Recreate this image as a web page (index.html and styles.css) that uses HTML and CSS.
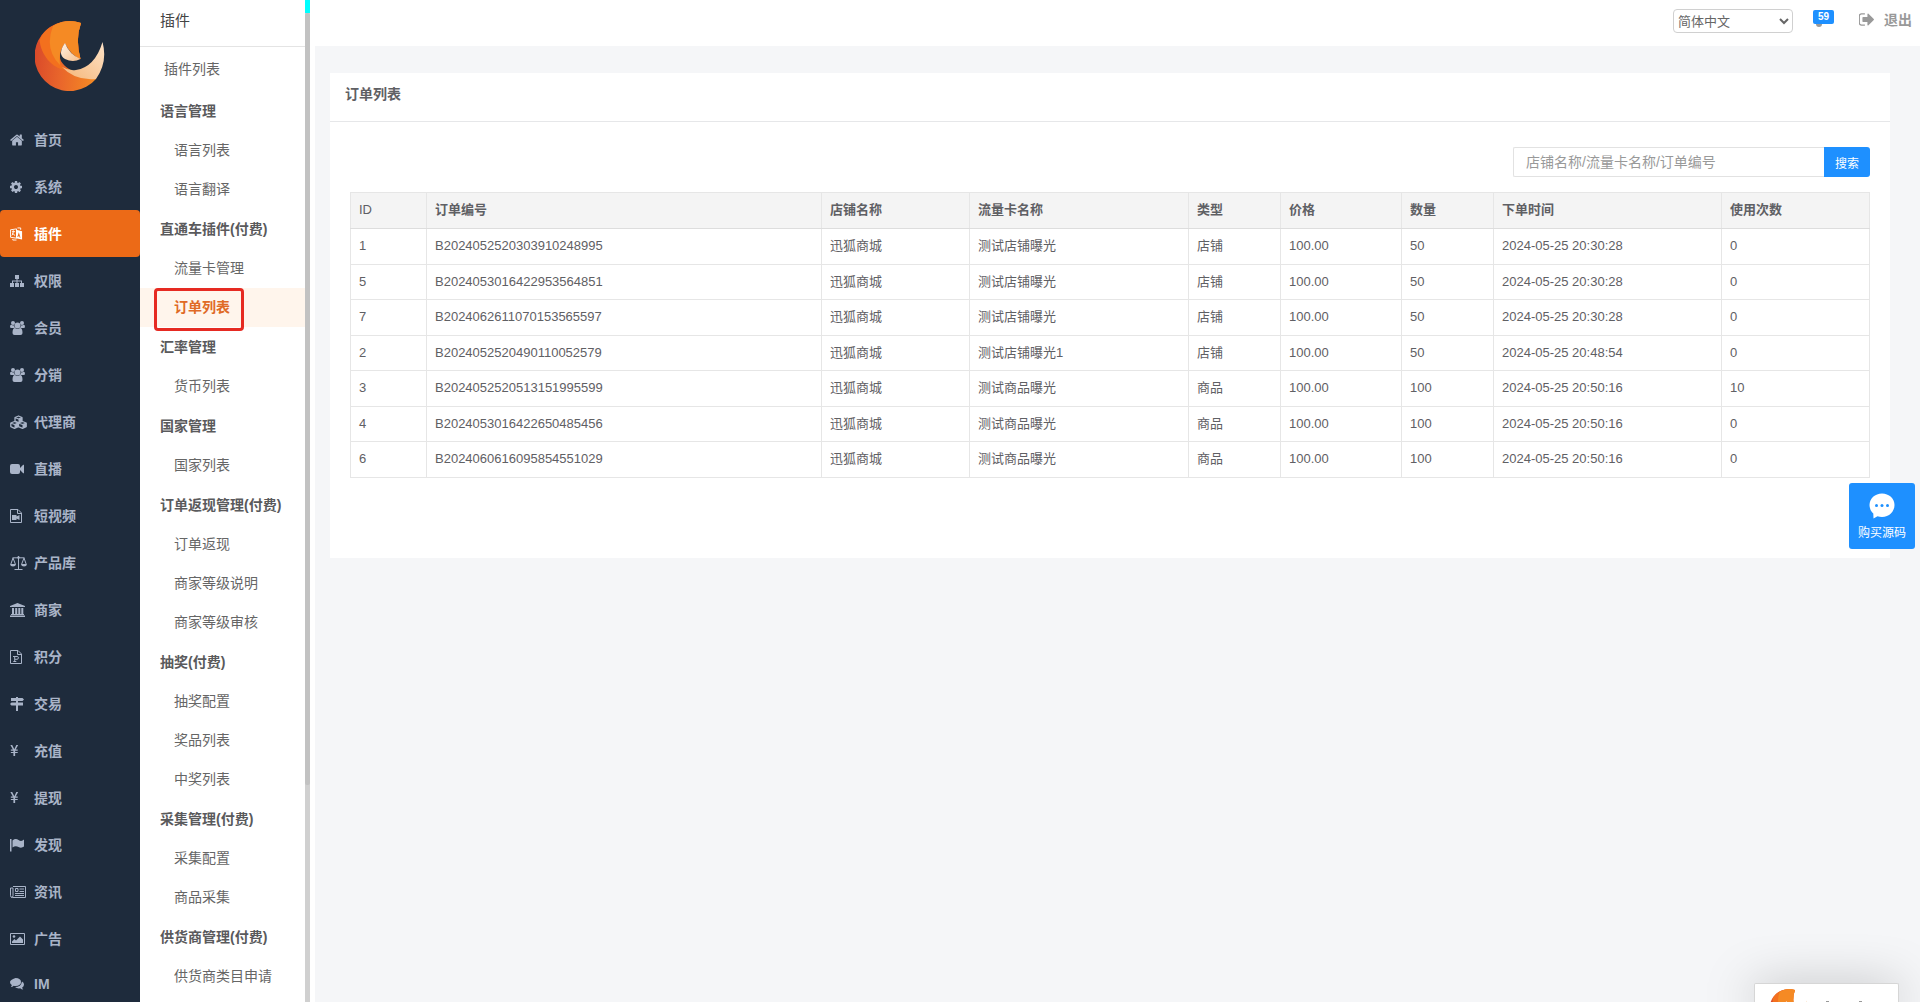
FILE: index.html
```html
<!DOCTYPE html>
<html lang="zh-CN">
<head>
<meta charset="utf-8">
<meta name="viewport" content="width=device-width, initial-scale=1">
<title>订单列表</title>
<link rel="stylesheet" href="styles.css">
</head>
<body>
<svg class="defs" aria-hidden="true">
  <defs>
    <linearGradient id="g-red" x1="0" y1="0.5" x2="1" y2="0.6">
      <stop offset="0" stop-color="#da4a2a"/><stop offset="0.45" stop-color="#e9662b"/><stop offset="1" stop-color="#f58a24"/>
    </linearGradient>
    <linearGradient id="g-cream" x1="0" y1="1" x2="1" y2="0">
      <stop offset="0" stop-color="#f5b577"/><stop offset="1" stop-color="#fde3c8"/>
    </linearGradient>
    <linearGradient id="g-drop" x1="0" y1="0" x2="1" y2="1">
      <stop offset="0" stop-color="#fff1e2"/><stop offset="1" stop-color="#f7bf8c"/>
    </linearGradient>
    <symbol id="logo" viewBox="0 0 70 70">
      <path fill="url(#g-red)" d="M46 2A35 35 0 1 0 61 58C50 56 30 50 25 38Q24 30 30 22Q36 34 45.500 38Q40 18 46 2z"/>
      <path fill="#f3701e" d="M46 2C30 -3 10 4 4.500 19C6 34 17 47 30 49Q25 44 25 36Q24 28 30 22Q36 34 45.500 38Q40 18 46 2z"/>
      <path fill="#f58a24" d="M46 2Q31 -3 18 5Q9 28 25 44Q23 30 30 22Q36 34 45.500 38Q40 18 46 2z"/>
      <path fill="url(#g-cream)" d="M67.500 21Q73 41 61 58Q40 60 27 46Q34 50 41 49Q60 46 67.500 21z"/>
      <path fill="url(#g-drop)" d="M30 22Q34 33 45.500 38Q38 42 30 38Q22 33 30 22z"/>
    </symbol>
    <symbol id="i-home" viewBox="64 64 1664 1664"><path d="M1472 992v480q0 26-19 45t-45 19h-384v-384h-256v384h-384q-26 0-45-19t-19-45v-480q0-1 .5-3t.5-3l575-474 575 474q1 2 1 6zm223-69l-62 74q-8 9-21 11h-3q-13 0-21-7l-692-577-692 577q-12 8-24 7-13-2-21-11l-62-74q-8-10-7-23.500t11-21.500l719-599q32-26 76-26t76 26l244 204v-195q0-14 9-23t23-9h192q14 0 23 9t9 23v408l219 182q10 8 11 21.500t-7 23.500z"/></symbol>
    <symbol id="i-cog" viewBox="128 128 1536 1536"><path d="M1152 896q0-106-75-181t-181-75-181 75-75 181 75 181 181 75 181-75 75-181zm512-109v222q0 12-8 23t-20 13l-185 28q-19 54-39 91 35 50 107 138 10 12 10 25t-9 23q-27 37-99 108t-94 71q-12 0-26-9l-138-108q-44 23-91 38-16 136-29 186-7 28-36 28h-222q-14 0-24.500-8.500t-11.500-21.500l-28-184q-49-16-90-37l-141 107q-10 9-25 9-14 0-25-11-126-114-165-168-7-10-7-23 0-12 8-23 15-21 51-66.500t54-70.500q-27-50-41-99l-183-27q-13-2-21-12.500t-8-23.500v-222q0-12 8-23t19-13l186-28q14-46 39-92-40-57-107-138-10-12-10-24 0-10 9-23 26-36 98.500-107.500t94.500-71.500q13 0 26 10l138 107q44-23 91-38 16-136 29-186 7-28 36-28h222q14 0 24.500 8.500t11.500 21.500l28 184q49 16 90 37l142-107q9-9 24-9 13 0 25 10 129 119 165 170 7 8 7 22 0 12-8 23-15 21-51 66.500t-54 70.500q26 50 41 98l183 28q13 2 21 12.500t8 23.500z"/></symbol>
    <symbol id="i-plugin" viewBox="0 0 14 14"><path fill="none" stroke="currentColor" d="M.5 2.500L7 1.500v10L.5 10.500zM2 4.500h3.500M3.500 3v1.500Q3.500 7 2 8.500M2.500 6Q4 8 5.500 8.500M8 .5h3.500v2M3 12.500v1h4"/><path d="M6.500 2.500L13 4v9L6.500 11.500z"/><path fill="#ec6a17" d="M9.500 5l1.800 6-1-.3-.3-1.200H9l-.2.800-.9-.2z"/></symbol>
    <symbol id="i-sitemap" viewBox="0 0 14 14"><path d="M5 1h4v4H7.500v1.500H12V9h2v4h-4V9h1V7.500H7.500V9H9v4H5V9h1.500V7.500H3V9h1v4H0V9h2V6.500h4.500V5H5z"/></symbol>
    <symbol id="i-users" viewBox="0 0 15 14"><circle cx="3" cy="2" r="2"/><circle cx="12" cy="2" r="2"/><circle cx="7.500" cy="4.500" r="3"/><path d="M0 6Q0 3.500 1.500 3.800Q3 5 4 4.300Q4 6 5 7H1.500Q0 7 0 6zM15 6q0-2.500-1.500-2.200Q12 5 11 4.300q0 1.700-1 2.700h3.500Q15 7 15 6zM2.500 12Q2.500 7 5 7Q7.500 9 10 7Q12.500 7 12.500 12Q12.500 14 10.500 14H4.500Q2.500 14 2.500 12z"/></symbol>
    <symbol id="i-cubes" viewBox="0 0 17 14"><path fill="none" stroke="currentColor" stroke-width="1.300" stroke-linejoin="round" d="M8.500 1L12 2.500V6L8.500 7.500L5 6V2.500zM5 2.500l3.500 1.500L12 2.500M4.500 6.500L8.300 8v3.700L4.500 13.300L.8 11.700V8zM.8 8l3.700 1.500L8.300 8M12.500 6.500L16.200 8v3.700l-3.700 1.600L8.500 11.700V8zM8.500 8l4 1.500L16.200 8"/><path d="M8.500 4L12 2.500V6L8.500 7.500zM4.500 9.500L8.300 8v3.700l-3.800 1.600zM12.500 9.500L16.200 8v3.700l-3.700 1.600z"/></symbol>
    <symbol id="i-video" viewBox="0 0 14 14"><rect y="2" width="10" height="10" rx="2"/><path d="M9.500 6.500L13.200 2.800Q14 2.300 14 3.300V10.700Q14 11.700 13.200 11.200L9.500 7.500z"/></symbol>
    <symbol id="i-filevideo" viewBox="0 0 12 14"><path fill="none" stroke="currentColor" d="M.5.500H8L11.500 4v9.500H.5zM7.500.5V4.500H11.500"/><path d="M2 6h4.500v1.500L9.500 6v5L6.500 9.500V11H2z"/></symbol>
    <symbol id="i-scale" viewBox="0 0 17 14"><path fill="none" stroke="currentColor" d="M8.500 0v13M4.500 13.500h8M2.500 1.800h12M3 2L.7 8.500h4.800zM14 2l-2.500 6.500h4.800z"/><path d="M0 8.500h6Q5.500 10.500 3 10.500T0 8.500zM11 8.500h6Q16.500 10.500 14 10.500T11 8.500z"/><circle cx="8.500" cy="1.500" r="1.200"/></symbol>
    <symbol id="i-bank" viewBox="0 0 15 14"><path d="M7.500 0L15 3v1H0V3zM2 5h2v6H2zM5.200 5h2v6h-2zM8.300 5h2v6h-2zM11.300 5h2v6h-2zM1 11h13v1H1zM0 12.500h15V14H0z"/></symbol>
    <symbol id="i-filep" viewBox="0 0 12 14"><path fill="none" stroke="currentColor" d="M.5.500H8L11.500 4v9.500H.5zM7.500.5V4.500H11.500M3 6.500h4q1.500 0 1.500 1.300T7 9.300H5M4.700 6.500V11.500M3.300 11.500h3"/></symbol>
    <symbol id="i-signs" viewBox="0 0 14 14"><path d="M6 0h2v1h4.500L14 2.500L12.500 4H1V1h5zM6 4h2v1.500h5v3H8V14H6V8.500H1.500L0 7L1.500 5.500H6z"/></symbol>
    <symbol id="i-yen" viewBox="0 0 9 12"><path d="M0 0h2l2.300 4.500L6.500 0h2L5.800 5H8v1.200H5.200V7.500H8v1.200H5.200V12H3.300V8.700H.5V7.500h2.800V6.200H.5V5h2.200z"/></symbol>
    <symbol id="i-flag" viewBox="0 0 14 14"><path d="M0 1h1.500v12.500H0zM2.500 2.500Q5.500 0 8.500 2T14 1.500V8.500Q11.500 10.500 8.500 9T2.500 9.500z"/></symbol>
    <symbol id="i-news" viewBox="0 0 16 12"><path fill="none" stroke="currentColor" d="M3 .5h12.500v11H2.500Q.5 11.500.5 9.500V2H3V9.500Q3 11.500 1.500 11.500M9.500 3h4.500M9.500 5.500h4.500M5 7.500h9M5 9.500h9"/><path fill="none" stroke="currentColor" d="M5.500 2.500h2.500v3H5.500z"/></symbol>
    <symbol id="i-image" viewBox="0 0 15 12"><path fill="none" stroke="currentColor" d="M.5.500h14v11H.5z"/><circle cx="4" cy="3.500" r="1.300"/><path d="M2 10V8.500L4.500 6L6 7.500L10 3.500L13 6.500V10z"/></symbol>
    <symbol id="i-comments" viewBox="0 0 14 12"><path d="M5.500 0Q11 .3 11 4T5.500 8Q4.500 8 3.700 7.800Q2.500 9 .8 9Q1.800 8 1.800 7Q0 6 0 4T5.500 0z"/><path d="M12 3.500q2 1 2 3t-1.800 3q0 1 1 2q-1.700 0-3-1.200Q7 10.800 5 9Q11 9 12 3.500z"/></symbol>
    <symbol id="i-out" viewBox="96 256 1540 1280"><path d="M704 1440q0 4 1 20t.5 26.500-3 23.500-10 19.500-20.500 6.500h-320q-119 0-203.500-84.500t-84.500-203.500v-704q0-119 84.500-203.500t203.500-84.500h320q13 0 22.500 9.500t9.500 22.500q0 4 1 20t.5 26.500-3 23.500-10 19.500-20.500 6.500h-320q-66 0-113 47t-47 113v704q0 66 47 113t113 47h312l11.500 1 11.500 3 8 5.500 7 9 2 13.500zm928-544q0 26-19 45l-544 544q-19 19-45 19t-45-19-19-45v-288h-448q-26 0-45-19t-19-45v-384q0-26 19-45t45-19h448v-288q0-26 19-45t45-19 45 19l544 544q19 19 19 45z"/></symbol>
  </defs>
</svg>
<div class="app">
  <nav class="sidebar" aria-label="主菜单">
    <a class="brand" href="#" aria-label="首页"><svg class="brand-logo"><use href="#logo"/></svg></a>
    <ul class="menu">
      <li><a href="#"><span class="ico"><svg width="14" height="14"><use href="#i-home"/></svg></span>首页</a></li>
      <li><a href="#"><span class="ico"><svg width="12" height="12"><use href="#i-cog"/></svg></span>系统</a></li>
      <li><a class="active" href="#"><span class="ico"><svg width="13" height="14"><use href="#i-plugin"/></svg></span>插件</a></li>
      <li><a href="#"><span class="ico"><svg width="14" height="14"><use href="#i-sitemap"/></svg></span>权限</a></li>
      <li><a href="#"><span class="ico"><svg width="15" height="14"><use href="#i-users"/></svg></span>会员</a></li>
      <li><a href="#"><span class="ico"><svg width="15" height="14"><use href="#i-users"/></svg></span>分销</a></li>
      <li><a href="#"><span class="ico"><svg width="17" height="14"><use href="#i-cubes"/></svg></span>代理商</a></li>
      <li><a href="#"><span class="ico"><svg width="14" height="14"><use href="#i-video"/></svg></span>直播</a></li>
      <li><a href="#"><span class="ico"><svg width="12" height="14"><use href="#i-filevideo"/></svg></span>短视频</a></li>
      <li><a href="#"><span class="ico"><svg width="17" height="14"><use href="#i-scale"/></svg></span>产品库</a></li>
      <li><a href="#"><span class="ico"><svg width="15" height="14"><use href="#i-bank"/></svg></span>商家</a></li>
      <li><a href="#"><span class="ico"><svg width="12" height="14"><use href="#i-filep"/></svg></span>积分</a></li>
      <li><a href="#"><span class="ico"><svg width="14" height="14"><use href="#i-signs"/></svg></span>交易</a></li>
      <li><a href="#"><span class="ico"><svg width="9" height="11"><use href="#i-yen"/></svg></span>充值</a></li>
      <li><a href="#"><span class="ico"><svg width="9" height="11"><use href="#i-yen"/></svg></span>提现</a></li>
      <li><a href="#"><span class="ico"><svg width="14" height="14"><use href="#i-flag"/></svg></span>发现</a></li>
      <li><a href="#"><span class="ico"><svg width="16" height="12"><use href="#i-news"/></svg></span>资讯</a></li>
      <li><a href="#"><span class="ico"><svg width="15" height="12"><use href="#i-image"/></svg></span>广告</a></li>
      <li><a class="latin" href="#"><span class="ico"><svg width="14" height="12"><use href="#i-comments"/></svg></span>IM</a></li>
    </ul>
  </nav>

  <nav class="submenu" aria-label="插件">
    <div class="submenu-body">
      <h2 class="submenu-title">插件</h2>
      <a class="sub-top" href="#">插件列表</a>
      <h3>语言管理</h3>
      <a href="#">语言列表</a>
      <a href="#">语言翻译</a>
      <h3>直通车插件(付费)</h3>
      <a href="#">流量卡管理</a>
      <a class="current" href="#">订单列表<span class="marker"></span></a>
      <h3>汇率管理</h3>
      <a href="#">货币列表</a>
      <h3>国家管理</h3>
      <a href="#">国家列表</a>
      <h3>订单返现管理(付费)</h3>
      <a href="#">订单返现</a>
      <a href="#">商家等级说明</a>
      <a href="#">商家等级审核</a>
      <h3>抽奖(付费)</h3>
      <a href="#">抽奖配置</a>
      <a href="#">奖品列表</a>
      <a href="#">中奖列表</a>
      <h3>采集管理(付费)</h3>
      <a href="#">采集配置</a>
      <a href="#">商品采集</a>
      <h3>供货商管理(付费)</h3>
      <a href="#">供货商类目申请</a>
    </div>
    <div class="scroll-track"><div class="scroll-accent"></div><div class="scroll-thumb"></div></div>
  </nav>

  <div class="page">
    <header class="topbar">
      <select class="lang" aria-label="语言"><option>简体中文</option></select>
      <a class="messages" href="#" aria-label="消息"><span class="badge">59</span></a>
      <a class="logout" href="#"><svg width="15" height="13"><use href="#i-out"/></svg>退出</a>
    </header>
    <main class="content">
      <section class="card">
        <h1 class="card-title">订单列表</h1>
        <div class="card-body">
          <form class="search">
            <input type="text" aria-label="搜索订单" placeholder="店铺名称/流量卡名称/订单编号">
            <button type="button">搜索</button>
          </form>
          <table class="orders">
            <colgroup><col class="c-id"><col class="c-no"><col class="c-shop"><col class="c-card"><col class="c-type"><col class="c-price"><col class="c-qty"><col class="c-time"><col class="c-used"></colgroup>
            <thead><tr><th class="latin">ID</th><th>订单编号</th><th>店铺名称</th><th>流量卡名称</th><th>类型</th><th>价格</th><th>数量</th><th>下单时间</th><th>使用次数</th></tr></thead>
            <tbody>
              <tr><td>1</td><td>B2024052520303910248995</td><td>迅狐商城</td><td>测试店铺曝光</td><td>店铺</td><td>100.00</td><td>50</td><td>2024-05-25 20:30:28</td><td>0</td></tr>
              <tr><td>5</td><td>B2024053016422953564851</td><td>迅狐商城</td><td>测试店铺曝光</td><td>店铺</td><td>100.00</td><td>50</td><td>2024-05-25 20:30:28</td><td>0</td></tr>
              <tr><td>7</td><td>B2024062611070153565597</td><td>迅狐商城</td><td>测试店铺曝光</td><td>店铺</td><td>100.00</td><td>50</td><td>2024-05-25 20:30:28</td><td>0</td></tr>
              <tr><td>2</td><td>B2024052520490110052579</td><td>迅狐商城</td><td>测试店铺曝光1</td><td>店铺</td><td>100.00</td><td>50</td><td>2024-05-25 20:48:54</td><td>0</td></tr>
              <tr><td>3</td><td>B2024052520513151995599</td><td>迅狐商城</td><td>测试商品曝光</td><td>商品</td><td>100.00</td><td>100</td><td>2024-05-25 20:50:16</td><td>10</td></tr>
              <tr><td>4</td><td>B2024053016422650485456</td><td>迅狐商城</td><td>测试商品曝光</td><td>商品</td><td>100.00</td><td>100</td><td>2024-05-25 20:50:16</td><td>0</td></tr>
              <tr><td>6</td><td>B2024060616095854551029</td><td>迅狐商城</td><td>测试商品曝光</td><td>商品</td><td>100.00</td><td>100</td><td>2024-05-25 20:50:16</td><td>0</td></tr>
            </tbody>
          </table>
        </div>
      </section>
    </main>
  </div>
</div>

<button class="buy" type="button">
  <svg width="26" height="26" viewBox="0 0 26 26"><path fill="#fff" d="M13 0.500C20 .5 25.500 5.500 25.500 12S20 24 13 24Q10.500 24 8.500 23.200L4.500 25.500L4.300 20.500Q.5 17 .5 12C.5 5.500 6 .5 13 .5z"/><g fill="#1e90ff"><circle cx="7.500" cy="12.500" r="1.500"/><circle cx="13" cy="12.500" r="1.500"/><circle cx="18.500" cy="12.500" r="1.500"/></g></svg>
  <span>购买源码</span>
</button>
<aside class="popup"><svg class="popup-logo"><use href="#logo"/></svg><span class="dots"><i></i><i></i></span></aside>
</body>
</html>
```
FILE: styles.css
```css
* { box-sizing: border-box; }

body {
  margin: 0;
  height: 100vh;
  overflow: hidden;
  background: #f5f6f8;
  color: #5f6064;
  font: 14px/20px "Liberation Sans", "Noto Sans CJK SC", sans-serif;
}

a { color: inherit; text-decoration: none; }
h1, h2, h3, ul { margin: 0; padding: 0; }
.defs { position: absolute; width: 0; height: 0; }
.app { display: flex; height: 100vh; }

/* Main menu */
.sidebar { flex: none; width: 140px; overflow: hidden; background: #1e2b3c; color: #a9b4c8; }
.brand { display: block; height: 116px; padding: 21px 0 0 35px; }
.brand-logo { width: 70px; height: 70px; }
.menu { list-style: none; }
.menu a { display: flex; align-items: center; height: 47px; padding-left: 10px; border-radius: 4px; font-weight: 600; }
.menu .active { background: #ec6a17; color: #fff; }
.menu .latin { height: 44px; }
.ico { display: flex; width: 24px; }
svg { fill: currentColor; }

/* Second-level menu */
.submenu { display: flex; flex: none; width: 175px; overflow: hidden; background: #fff; }
.submenu-body { width: 165px; color: #666; white-space: nowrap; }
.submenu-title { height: 47px; padding: 11px 20px 0; border-bottom: 1px solid #e4e4e4; font-size: 15px; font-weight: 400; color: #444; }
.submenu-body a { display: block; height: 39px; padding: 9px 0 0 34px; }
.submenu-body .sub-top { height: 44px; padding: 12px 0 0 24px; }
.submenu-body h3 { height: 40px; padding: 10px 0 0 20px; font-size: 14px; font-weight: 600; color: #5a5a5c; }
.submenu-body .current { position: relative; background: #fff5ec; color: #e06a26; font-weight: 600; }
.marker { position: absolute; left: 14px; top: 0; width: 90px; height: 43px; border: 3px solid #e62a22; border-radius: 4px; z-index: 1; }
.scroll-track { display: flex; flex-direction: column; width: 5px; background: #d0d0d0; }
.scroll-accent { flex: none; height: 13px; background: #0ff; }
.scroll-thumb { height: 77%; background: #c2c2c2; border-radius: 2px; }

/* Top bar */
.page { flex: 1; min-width: 0; }
.topbar { display: flex; justify-content: flex-end; height: 46px; padding: 9px 8px 0 0; background: #fff; color: #999; }
.lang { width: 120px; height: 24px; padding: 0; border: 1px solid #d0d0d0; border-radius: 4px; background: #fff; color: #666; font: 13px "Liberation Sans", "Noto Sans CJK SC", sans-serif; }
.messages { margin: 1px 25px 0 20px; }
.badge { display: block; width: 21px; height: 14px; border-radius: 2px; background: #1e90ff; color: #fff; font-size: 10px; font-weight: 700; line-height: 14px; text-align: center; }
.messages::after { content: ""; display: block; width: 6px; height: 3px; margin-left: 3px; border-radius: 0 0 3px 3px; background: #999; }
.logout { display: flex; gap: 10px; padding-top: 1px; font-weight: 600; }
.logout svg { margin-top: 3px; }

/* Order list */
.content { padding: 27px 30px 0 15px; }
.card { min-height: 485px; background: #fff; }
.card-title { height: 49px; padding: 11px 15px; border-bottom: 1px solid #e6e7e9; font-size: 14px; font-weight: 600; }
.card-body { padding: 25px 20px 80px; }
.search { display: flex; justify-content: flex-end; margin-bottom: 15px; }
.search input { width: 311px; height: 30px; padding: 0 12px; border: 1px solid #e2e2e2; border-right: 0; border-radius: 2px 0 0 2px; font: inherit; }
.search input::placeholder { color: #999; opacity: 1; }
.search button { width: 46px; height: 30px; padding: 0; border: 0; border-radius: 0 3px 3px 0; background: #1e90ff; color: #fff; font: 12px "Liberation Sans", "Noto Sans CJK SC", sans-serif; }
.orders { width: 100%; border-collapse: collapse; table-layout: fixed; font-size: 13px; line-height: 19px; }
.orders th, .orders td { height: 36px; padding: 7px 8px 9px; border: 1px solid #e6e6e6; text-align: left; vertical-align: top; white-space: nowrap; }
.orders th { background: #f4f4f4; border-bottom-color: #ddd; font-weight: 600; }
.orders .latin { font-weight: 400; }
.orders tr:nth-child(even) td { height: 35px; padding-bottom: 8px; }
.orders tr:nth-child(odd) td { height: 36px; }
.c-id { width: 76px; }
.c-shop { width: 148px; }
.c-card { width: 219px; }
.c-type { width: 92px; }
.c-price { width: 121px; }
.c-qty { width: 92px; }
.c-time { width: 228px; }
.c-used { width: 148px; }

/* Floating pieces */
.buy { position: fixed; right: 5px; top: 483px; display: flex; flex-direction: column; align-items: center; gap: 5px; width: 66px; height: 66px; padding: 10px 0 0; border: 0; border-radius: 3px; background: #1e90ff; color: #fff; font: 12px/18px "Liberation Sans", "Noto Sans CJK SC", sans-serif; }
.popup { position: fixed; right: 21px; bottom: 0; display: flex; gap: 18px; width: 145px; height: 19px; padding: 5px 0 0 15px; background: #fff; border: 1px solid #d6d6d6; border-bottom: 0; border-radius: 2px 2px 0 0; box-shadow: 0 6px 50px rgba(0, 0, 0, .35); clip-path: inset(-80px -80px 0); }
.popup-logo { flex: none; width: 38px; height: 38px; }
.dots { display: flex; gap: 30px; padding-top: 12px; }
.dots i { width: 3px; height: 1px; background: #999; }
```
